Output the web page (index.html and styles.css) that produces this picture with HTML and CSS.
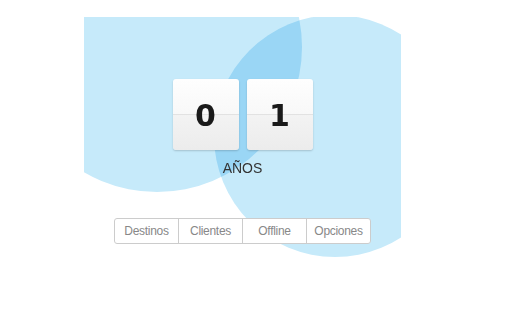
FILE: index.html
```html
<!DOCTYPE html>
<html lang="es">
<head>
    <meta charset="UTF-8">
    <meta name="viewport" content="width=device-width, initial-scale=1.0">
    <title>Contador</title>
    <link rel="stylesheet" href="styles.css">
</head>
<body>
    <div class="stage">
        <!-- decorative background circles -->
        <div class="blob blob-left"></div>
        <div class="blob blob-right"></div>

        <div class="counter">
            <div class="flip"><span>0</span></div>
            <div class="flip"><span>1</span></div>
        </div>
        <div class="label">AÑOS</div>

        <div class="tabs">
            <button class="tab">Destinos</button>
            <button class="tab">Clientes</button>
            <button class="tab">Offline</button>
            <button class="tab">Opciones</button>
        </div>
    </div>
</body>
</html>
```
FILE: styles.css
```css
/* Basic reset */
* {
    box-sizing: border-box;
    margin: 0;
    padding: 0;
}
body {
    background-color: #fff;
    font-family: "Liberation Sans", Arial, sans-serif;
}
/* Area holding the circles and the counter */
.stage {
    position: relative;
    width: 317px;
    height: 240px;
    margin: 17px 0 0 84px;
    padding-top: 62px;
    overflow: hidden;
    isolation: isolate;
    background-color: #fff;
    display: flex;
    flex-direction: column;
    align-items: center;
}
.blob {
    position: absolute;
    border-radius: 50%;
    background-color: #c6eafa;
    mix-blend-mode: multiply;
    z-index: 0;
}
.blob-left {
    left: -72px;
    top: -115px;
    width: 290px;
    height: 290px;
}
.blob-right {
    left: 130px;
    top: -2px;
    width: 242px;
    height: 242px;
}
/* Flip clock cards */
.counter {
    position: relative;
    z-index: 1;
    display: flex;
    gap: 8px;
}
.flip {
    position: relative;
    width: 66px;
    height: 71px;
    border-radius: 3px;
    background: linear-gradient(to bottom, #fefefe 0%, #f8f8f8 50%, #f3f3f3 50%, #ececec 100%);
    box-shadow: 0 1px 2px rgba(0, 0, 0, 0.18);
    display: flex;
    justify-content: center;
    align-items: center;
}
.flip::after {
    content: "";
    position: absolute;
    left: 0;
    right: 0;
    top: 35px;
    border-top: 1px solid #e2e2e2;
}
.flip span {
    position: relative;
    z-index: 1;
    font-family: "DejaVu Sans", sans-serif;
    font-weight: bold;
    font-size: 30px;
    line-height: 34px;
    color: #1a1a1a;
    padding-top: 3px;
}
.label {
    position: relative;
    z-index: 1;
    margin-top: 10px;
    font-size: 14px;
    line-height: 16px;
    color: #333;
}
/* Button group */
.tabs {
    position: relative;
    z-index: 1;
    margin-top: 42px;
    display: flex;
    border: 1px solid #ccc;
    border-radius: 3px;
    background-color: #fff;
}
.tab {
    width: 64px;
    height: 24px;
    border: none;
    border-left: 1px solid #ccc;
    background: none;
    font-family: "Liberation Sans", Arial, sans-serif;
    font-size: 12px;
    letter-spacing: -0.3px;
    color: #888;
    cursor: pointer;
}
.tab:first-child {
    border-left: none;
    width: 63px;
}
```
